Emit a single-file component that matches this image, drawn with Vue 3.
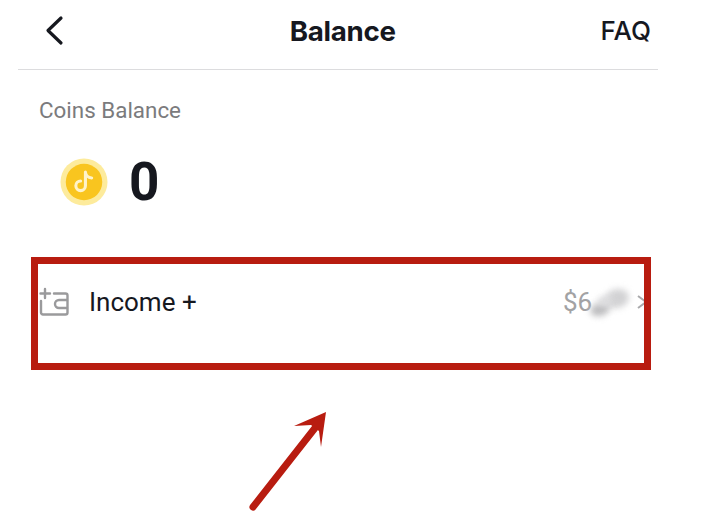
<script setup>
const title = 'Balance'
</script>

<template>
  <div class="page">
    <header class="head">
      <svg class="back" width="20" height="32" viewBox="0 0 20 32"><path d="M16 3 L3 15.500 L16 28" fill="none" stroke="#16181f" stroke-width="3.200" stroke-linecap="round" stroke-linejoin="round"/></svg>
      <h1 class="title">{{ title }}</h1>
      <span class="faq">FAQ</span>
    </header>
    <section class="coins">
      <div class="coins-label">Coins Balance</div>
      <div class="coins-row">
        <svg class="coin" width="48" height="48" viewBox="0 0 50 50">
          <circle cx="25" cy="25" r="24.500" fill="#fdeb9c"/>
          <circle cx="25" cy="25" r="19" fill="#f9c51f"/>
          <path d="M26.500 14.500 V29 a5 5 0 1 1 -5 -5 M26.500 15 c.5 3.500 3 5.500 6.500 5.800" fill="none" stroke="#fff3c9" stroke-width="3.200" stroke-linecap="round"/>
        </svg>
        <span class="amount">0</span>
      </div>
    </section>
    <section class="income">
      <svg class="wallet" width="32" height="30" viewBox="0 0 32 30" fill="none" stroke="#9a9a9c" stroke-width="2.400" stroke-linecap="round" stroke-linejoin="round">
        <path d="M7 2 V11 M2.500 6.500 H12"/>
        <path d="M16 6.500 H27.500 a2 2 0 0 1 2 2 V25.500 a2 2 0 0 1 -2 2 H5 a2 2 0 0 1 -2 -2 V14"/>
        <path d="M29 13 H21 a4 4 0 0 0 0 8 H29"/>
      </svg>
      <span class="income-label">Income +</span>
      <span class="income-value">
        <span class="money">$6</span>
        <span class="smudge"></span>
        <span class="smudge two"></span>
        <span class="smudge three"></span>
        <svg class="chev" width="12" height="16" viewBox="0 0 12 16"><path d="M2 2 L10 8 L2 14" fill="none" stroke="#a9a9ab" stroke-width="2"/></svg>
      </span>
    </section>
    <div class="frame"></div>
    <svg class="arrow" width="90" height="110" viewBox="0 0 90 110">
      <path d="M6 99 L68 20" stroke="#b81c10" stroke-width="7" stroke-linecap="round" fill="none"/>
      <path d="M79 4 L47 18 L64 17 L72 23 L74 39 Z" fill="#b81c10"/>
    </svg>
  </div>
</template>

<style>
html, body { margin: 0; background: #fff; }
</style>

<style scoped>
.page {
  position: relative;
  width: 705px;
  height: 521px;
  overflow: hidden;
  background: #fff;
  font-family: Inter, "Liberation Sans", sans-serif;
  color: #16181f;
}
.head {
  box-sizing: border-box;
  width: 640px;
  height: 70px;
  margin-left: 18px;
  padding: 0 7px 8px 27px;
  display: flex;
  align-items: center;
  justify-content: space-between;
  border-bottom: 1px solid #dcdcde;
}
.back { display: block; }
.title {
  margin: 0 0 0 20px;
  font-size: 27.700px;
  font-weight: 700;
  line-height: 32px;
  letter-spacing: -0.3px;
}
.faq {
  font-size: 26px;
  font-weight: 500;
  line-height: 32px;
}
.coins { padding: 26px 0 0 39px; }
.coins-label {
  font-family: Roboto, sans-serif;
  font-size: 22.400px;
  line-height: 28px;
  color: #7b7b7d;
}
.coins-row {
  display: flex;
  align-items: center;
  gap: 21px;
  margin: 34px 0 0 21px;
  height: 48px;
}
.coin { display: block; }
.amount {
  font-family: Roboto, sans-serif;
  font-size: 53px;
  font-weight: 700;
  line-height: 48px;
}
.income {
  display: flex;
  align-items: center;
  width: 610px;
  height: 32px;
  margin: 80px 0 0 38px;
}
.wallet { display: block; }
.income-label {
  margin-left: 19px;
  font-family: Roboto, sans-serif;
  font-size: 26px;
  line-height: 32px;
}
.income-value {
  position: relative;
  display: flex;
  align-items: center;
  margin-left: auto;
}
.money {
  width: 73px;
  font-family: Roboto, sans-serif;
  font-size: 26px;
  line-height: 32px;
  color: #a2a2a4;
}
.smudge {
  position: absolute;
  left: 42px;
  top: 3px;
  width: 24px;
  height: 19px;
  border-radius: 50%;
  background: #d2d2d4;
  filter: blur(3px);
  transform: rotate(-15deg);
}
.smudge.two { left: 27px; top: 17px; width: 20px; height: 13px; background: #bcbcbe; }
.smudge.three { left: 34px; top: 10px; width: 16px; height: 10px; background: #dcdcde; }
.chev { display: block; }
.frame {
  position: absolute;
  left: 31px;
  top: 257px;
  box-sizing: border-box;
  width: 620px;
  height: 113px;
  border: 7px solid #b81c10;
}
.arrow {
  position: absolute;
  left: 247px;
  top: 408px;
}
</style>
